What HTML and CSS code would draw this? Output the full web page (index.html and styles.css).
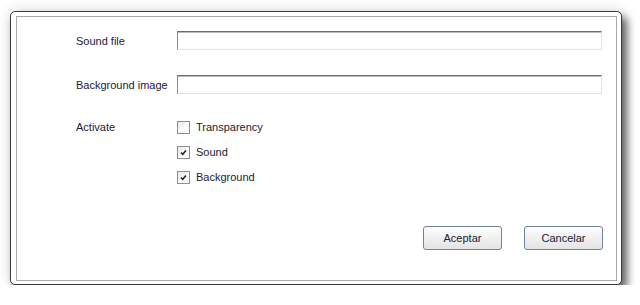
FILE: index.html
```
<!DOCTYPE html>
<html lang="en">
<head>
    <meta charset="UTF-8">
    <title>Settings</title>
    <link rel="stylesheet" href="styles.css">
</head>
<body>

<!-- Dialog window -->
<div class="window">
    <div class="panel">

        <div class="field">
            <label for="sound-file">Sound file</label>
            <input type="text" id="sound-file">
        </div>

        <div class="field">
            <label for="bg-image">Background image</label>
            <input type="text" id="bg-image">
        </div>

        <div class="activate">
            <span class="label">Activate</span>
            <div class="checks">
                <div class="check"><span class="box"></span>Transparency</div>
                <div class="check"><span class="box checked"><svg width="9" height="9" viewBox="0 0 9 9"><polyline points="2,4.5 3.7,6.3 7,2.5" fill="none" stroke="#222" stroke-width="1.5"/></svg></span>Sound</div>
                <div class="check"><span class="box checked"><svg width="9" height="9" viewBox="0 0 9 9"><polyline points="2,4.5 3.7,6.3 7,2.5" fill="none" stroke="#222" stroke-width="1.5"/></svg></span>Background</div>
            </div>
        </div>

        <div class="buttons">
            <button>Aceptar</button>
            <button>Cancelar</button>
        </div>

    </div>
</div>

</body>
</html>
```

FILE: styles.css
```
/* Global */
body {
    margin: 0;
    background-color: #fff;
    font-family: "Liberation Sans", Arial, sans-serif;
    font-size: 11px;
    color: #1b2233;
}

/* Window frame */
.window {
    box-sizing: border-box;
    margin: 11px 0 0 10px;
    width: 612px;
    height: 274px;
    padding: 4px 4px 3px 5px;
    background: #fff;
    border: 1px solid #3a3a3a;
    border-radius: 5px;
    box-shadow: 5px 6px 8px rgba(0, 0, 0, 0.6), 0 0 14px rgba(0, 0, 0, 0.15);
    display: flex;
}

.panel {
    flex: 1;
    border: 1px solid #a9a9a9;
    padding: 14px 13px 0 59px;
}

/* Text fields */
.field {
    display: grid;
    grid-template-columns: 101px 425px;
    align-items: center;
    margin-bottom: 25px;
}

.field input {
    box-sizing: border-box;
    width: 425px;
    height: 19px;
    margin: 0;
    padding: 0;
    border: 1px solid;
    border-color: #6e6e6e #e2e2e2 #e2e2e2 #8a8a8a;
    box-shadow: inset 0 1px 0 #b9b9b9;
    background: #fff;
}

/* Checkboxes */
.activate {
    display: grid;
    grid-template-columns: 101px auto;
    margin-top: 27px;
}

.activate .label {
    line-height: 13px;
}

.checks {
    display: flex;
    flex-direction: column;
    gap: 12px;
}

.check {
    display: flex;
    align-items: center;
    height: 13px;
    line-height: 13px;
}

.box {
    box-sizing: border-box;
    width: 13px;
    height: 13px;
    margin-right: 6px;
    border: 1px solid #8f8f8f;
    background: linear-gradient(135deg, #e6e6e6, #fdfdfd 60%);
    display: flex;
    align-items: center;
    justify-content: center;
}

/* Buttons */
.buttons {
    display: flex;
    justify-content: flex-end;
    gap: 22px;
    margin-top: 42px;
}

.buttons button {
    width: 79px;
    height: 24px;
    padding: 0;
    font-family: "Liberation Sans", Arial, sans-serif;
    font-size: 11px;
    color: #1b2233;
    border: 1px solid #6f839c;
    border-radius: 3px;
    background: linear-gradient(to bottom, #fdfdfd 0%, #f0f0f0 50%, #e4e4e4 100%);
}
```
